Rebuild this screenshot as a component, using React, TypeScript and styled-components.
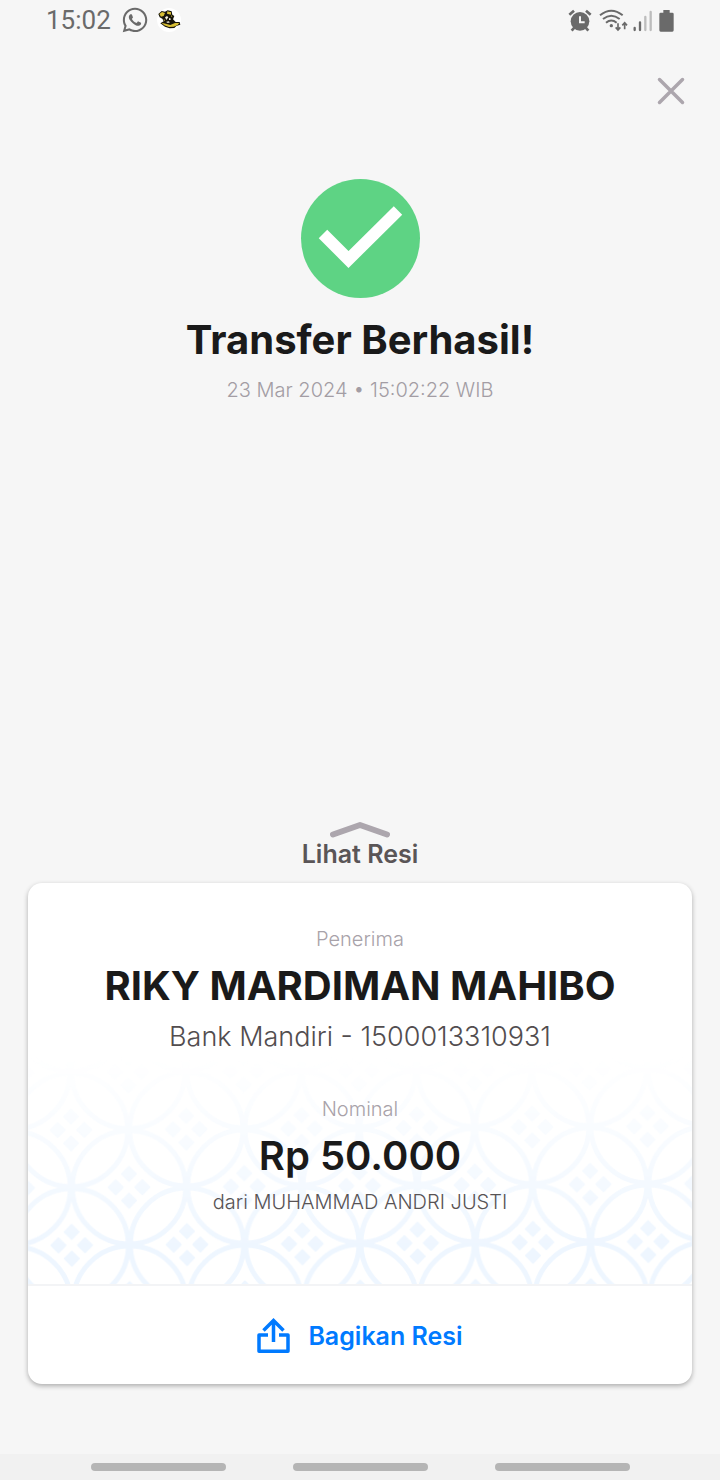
import React from "react";
import styled, { createGlobalStyle } from "styled-components";
import { FaWhatsapp } from "react-icons/fa";

const GlobalStyle = createGlobalStyle`
  *, *::before, *::after { box-sizing: border-box; }
  body { margin: 0; background: #f6f6f6; }
  button { border: 0; padding: 0; background: none; font: inherit; cursor: pointer; }
  h1, h2, p { margin: 0; }
  svg { display: block; flex: none; }
`;

const Screen = styled.div`
  display: flex;
  flex-direction: column;
  min-height: 100vh;
  background: #f6f6f6;
  font-family: Inter, "Liberation Sans", sans-serif;
  color: #1a1a1a;
`;

const StatusBar = styled.header`
  display: flex;
  align-items: center;
  justify-content: space-between;
  height: 40px;
  padding: 0 46px;
  color: #6a6a6a;
`;

const StatusGroup = styled.div<{ $gap: number }>`
  display: flex;
  align-items: center;
  gap: ${(p) => p.$gap}px;
`;

const Clock = styled.time`
  margin-right: 2px;
  font-family: Roboto, sans-serif;
  font-size: 26px;
  line-height: 40px;
`;

const TopBar = styled.div`
  display: flex;
  justify-content: flex-end;
  padding: 32px 30px 0;
`;

const CloseButton = styled.button`
  display: grid;
  place-items: center;
  width: 38px;
  height: 38px;
`;

const Result = styled.main`
  display: flex;
  flex: 1;
  flex-direction: column;
`;

const Summary = styled.section`
  display: flex;
  flex-direction: column;
  align-items: center;
  padding: 69px 24px 40px;
  text-align: center;
`;

const Title = styled.h1`
  margin-top: 18px;
  font-size: 40px;
  line-height: 48px;
  font-weight: 700;
`;

const Timestamp = styled.time`
  margin-top: 12px;
  font-size: 20px;
  line-height: 28px;
  font-weight: 300;
  color: #a39da4;
`;

const ReceiptToggle = styled.button`
  display: flex;
  flex-direction: column;
  align-items: center;
  align-self: center;
  margin-top: auto;
  font-size: 25px;
  line-height: 32px;
  font-weight: 600;
  color: #5a5557;
`;

const Card = styled.section`
  margin: 13px 28px 70px;
  border-radius: 14px;
  background: #fff;
  overflow: hidden;
  box-shadow: 0 2px 5px rgba(0, 0, 0, 0.3);
`;

const Details = styled.div`
  position: relative;
  display: flex;
  flex-direction: column;
  align-items: center;
  padding: 42px 16px 68px;
  border-bottom: 2px solid #f3f4f6;
  text-align: center;
`;

const PatternLayer = styled.svg`
  position: absolute;
  left: 0;
  bottom: 0;
  width: 100%;
  height: 240px;
`;

const Field = styled.div`
  position: relative;
  display: flex;
  flex-direction: column;
  align-items: center;

  & + & {
    margin-top: 40px;
  }
`;

const Label = styled.p`
  font-size: 20px;
  line-height: 28px;
  font-weight: 300;
  color: #a8a2a9;
`;

const Value = styled.h2<{ $weight: number }>`
  margin-top: 9px;
  font-size: 40px;
  line-height: 48px;
  font-weight: ${(p) => p.$weight};
`;

const Account = styled.p`
  margin-top: 9px;
  font-size: 27px;
  line-height: 36px;
  font-weight: 300;
  color: #524d4f;
`;

const Sender = styled.p`
  margin-top: 8px;
  font-size: 20px;
  line-height: 28px;
  font-weight: 300;
  color: #585355;
`;

const ShareButton = styled.button`
  display: flex;
  align-items: center;
  justify-content: center;
  gap: 18px;
  width: 100%;
  height: 98px;
  padding-top: 1px;
  font-size: 25px;
  line-height: 32px;
  font-weight: 600;
  color: #007aff;
`;

const NavBar = styled.nav`
  display: flex;
  justify-content: center;
  gap: 67px;
  padding: 9px 24px 9px;
  background: #f1f1f1;
`;

const NavHandle = styled.button`
  width: 135px;
  height: 8px;
  border-radius: 4px;
  background: #b5b5b5;
`;

function NotificationBadge() {
  return (
    <svg width="24" height="24" viewBox="0 0 72 72" aria-hidden="true">
      <circle cx="36" cy="36" r="36" fill="#fff" />
      <path d="M4 18 14 9 24 11 32 7 44 10 46 20 52 24 48 34 56 42 68 42 70 50 58 54 52 60 38 61 24 56 10 46 20 40 16 32 8 28Z" fill="#17140a" />
      <path d="M7 18 15 12 24 15 20 24 12 26Z M31 10 42 13 42 20 30 17Z M13 44 26 47 40 51 54 45 67 45 62 51 50 56 36 57 22 52Z" fill="#d8bf35" />
      <path d="M24 28 30 24 34 28 28 36Z M36 30 42 32 40 36 36 36Z M28 41 36 40 38 44 30 44Z" fill="#f4f0dd" />
      <path d="M20 34 24 36 22 40Z M42 22 46 24 44 28Z" fill="#e0c93c" />
    </svg>
  );
}

function AlarmIcon() {
  return (
    <svg width="27" height="23" viewBox="52 24 81 69" aria-label="Alarm" fill="none" stroke="currentColor">
      <circle cx="88" cy="61" r="28" fill="currentColor" stroke="none" />
      <path d="M56 41 70 29M120 41 106 29M71 80 63 89M105 80 113 89" strokeWidth="8" />
      <path d="M88 46V64H102" stroke="#f6f6f6" strokeWidth="6" />
    </svg>
  );
}

function WifiIcon() {
  return (
    <svg width="30" height="23" viewBox="146 24 90 69" aria-label="Wi-Fi" fill="none" stroke="currentColor" strokeWidth="6">
      <path d="M149 43Q183 16 217 43M158 54Q183 34 208 54M167 65Q183 52 199 65" />
      <circle cx="183" cy="74" r="5" fill="currentColor" stroke="none" />
      <path d="M203 67V87M196 79 203 87 210 79M223 85V65M216 73 223 65 230 73" strokeWidth="5" />
    </svg>
  );
}

function SignalIcon() {
  return (
    <svg width="22" height="23" viewBox="247 24 66 69" aria-label="Signal" stroke="currentColor" strokeWidth="7" strokeLinecap="round">
      <path d="M252 81V87M268 64V87" />
      <path d="M284 48V87M300 33V87" stroke="#bdbdbd" />
    </svg>
  );
}

function BatteryIcon() {
  return (
    <svg width="15" height="23" viewBox="329 24 45 69" aria-label="Battery" fill="currentColor">
      <path d="M342 27H361V35H369Q373 35 373 39V88Q373 92 369 92H334Q330 92 330 88V39Q330 35 334 35H342Z" />
    </svg>
  );
}

function SuccessIcon() {
  return (
    <svg width="119" height="119" viewBox="0 0 119 119" aria-hidden="true">
      <circle cx="59.5" cy="59.5" r="59.5" fill="#5ed384" />
      <path d="M22 55 47.5 80.500 97 31.500" fill="none" stroke="#fff" strokeWidth="12" />
    </svg>
  );
}

function ShareIcon() {
  return (
    <svg width="33" height="36" viewBox="0 0 33 36" fill="none" stroke="currentColor" strokeWidth="3.500" aria-hidden="true">
      <path d="M11 17H2V33.200H31V17H22" strokeLinejoin="round" />
      <path d="M16.500 24V3M6.500 12.500 16.500 2.500 26.500 12.500" />
    </svg>
  );
}

function KawungPattern() {
  const t = 115.3;
  const h = t / 2;
  const centers = [[0, 0], [t, 0], [h, h], [0, t], [t, t]];
  const square = (x: number, y: number) => `M${x} ${y - 7}l7 7-7 7-7-7Z`;
  return (
    <PatternLayer aria-hidden="true">
      <defs>
        <pattern id="kawung" width={t} height={t} patternUnits="userSpaceOnUse" patternTransform="translate(43 86) rotate(-.37)">
          {centers.map(([x, y]) => (
            <g key={`${x}-${y}`}>
              <circle cx={x} cy={y} r={h - 1} fill="none" stroke="#eef6ff" strokeWidth="5" />
              <path
                d={square(x, y - 13.3) + square(x, y + 13.3) + square(x - 13.3, y) + square(x + 13.3, y)}
                fill="#eef6ff"
                stroke="#eef6ff"
                strokeWidth="2"
                strokeLinejoin="round"
              />
            </g>
          ))}
        </pattern>
        <linearGradient id="fade" x1="0" y1="0" x2="0" y2="1">
          <stop offset="0.050" stopColor="#fff" stopOpacity="0" />
          <stop offset="0.350" stopColor="#fff" stopOpacity="0.350" />
          <stop offset="0.850" stopColor="#fff" stopOpacity="1" />
        </linearGradient>
        <mask id="fadeMask">
          <rect width="100%" height="100%" fill="url(#fade)" />
        </mask>
      </defs>
      <rect width="100%" height="100%" fill="url(#kawung)" mask="url(#fadeMask)" />
    </PatternLayer>
  );
}

export default function App() {
  return (
    <Screen>
      <GlobalStyle />
      <StatusBar>
        <StatusGroup $gap={8}>
          <Clock>15:02</Clock>
          <FaWhatsapp size={28} aria-label="WhatsApp" />
          <NotificationBadge />
        </StatusGroup>
        <StatusGroup $gap={4}>
          <AlarmIcon />
          <WifiIcon />
          <SignalIcon />
          <BatteryIcon />
        </StatusGroup>
      </StatusBar>
      <TopBar>
        <CloseButton aria-label="Tutup">
          <svg width="28" height="28" viewBox="0 0 28 28" stroke="#aca6ad" strokeWidth="3.500" strokeLinecap="round">
            <path d="M2.500 2.500 25.500 25.500M25.500 2.500 2.500 25.500" />
          </svg>
        </CloseButton>
      </TopBar>
      <Result>
        <Summary>
          <SuccessIcon />
          <Title>Transfer Berhasil!</Title>
          <Timestamp>23 Mar 2024 • 15:02:22 WIB</Timestamp>
        </Summary>
        <ReceiptToggle>
          <svg width="60" height="17" viewBox="0 0 60 17" fill="none" stroke="#aca6ad" strokeWidth="6" strokeLinecap="round" strokeLinejoin="round" aria-hidden="true">
            <path d="M3 13.500 30 4 57 13.500" />
          </svg>
          Lihat Resi
        </ReceiptToggle>
        <Card>
          <Details>
            <KawungPattern />
            <Field>
              <Label>Penerima</Label>
              <Value $weight={700}>RIKY MARDIMAN MAHIBO</Value>
              <Account>Bank Mandiri - 1500013310931</Account>
            </Field>
            <Field>
              <Label>Nominal</Label>
              <Value $weight={600}>Rp 50.000</Value>
              <Sender>dari MUHAMMAD ANDRI JUSTI</Sender>
            </Field>
          </Details>
          <ShareButton>
            <ShareIcon />
            Bagikan Resi
          </ShareButton>
        </Card>
      </Result>
      <NavBar aria-label="Navigasi sistem">
        <NavHandle aria-label="Aplikasi terbaru" />
        <NavHandle aria-label="Beranda" />
        <NavHandle aria-label="Kembali" />
      </NavBar>
    </Screen>
  );
}
